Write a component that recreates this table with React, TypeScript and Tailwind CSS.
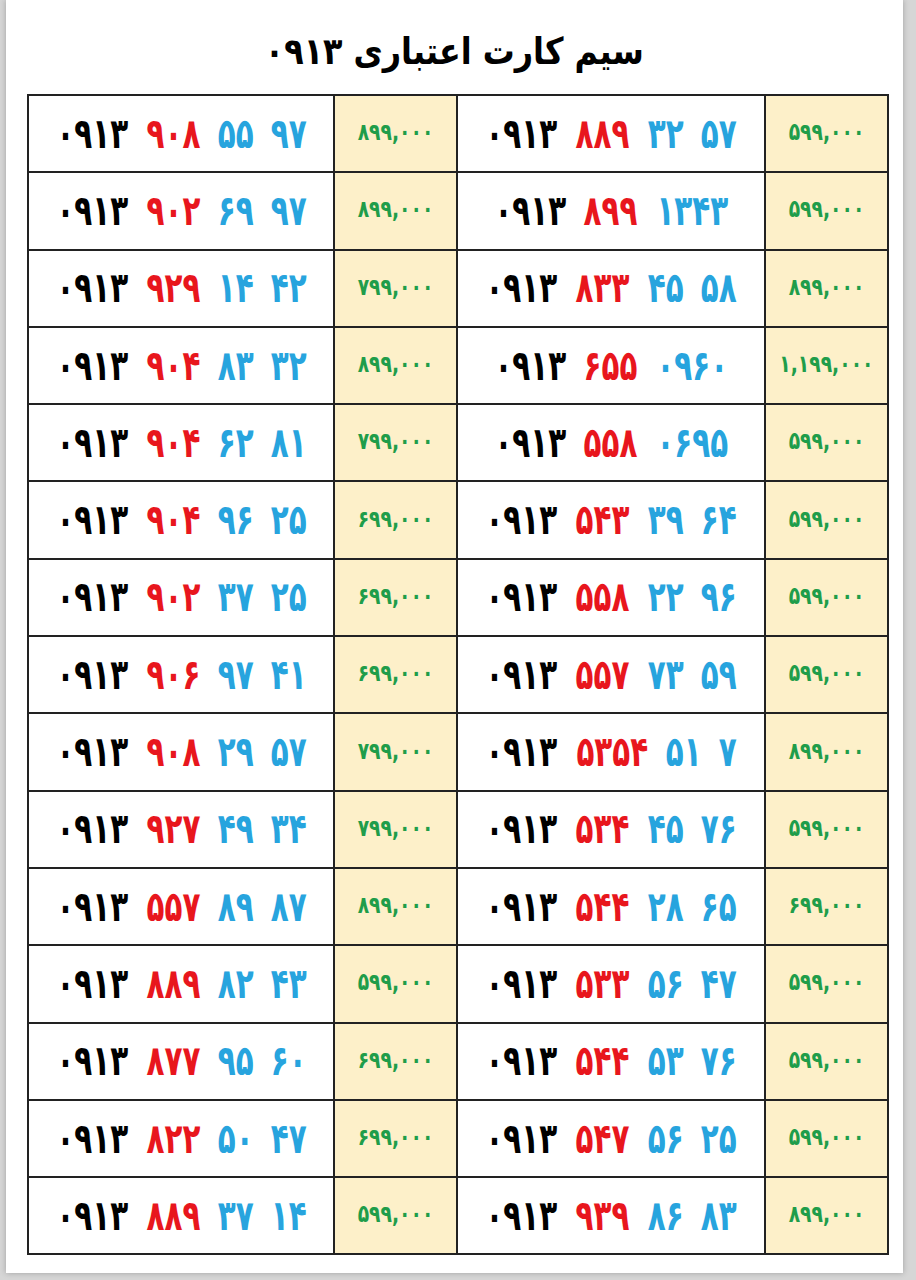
import React from "react";

type Item = { red: string; blue: string[]; price: string };

const rows: [Item, Item][] = [
  [{ red: "۹۰۸", blue: ["۵۵", "۹۷"], price: "۸۹۹,۰۰۰" }, { red: "۸۸۹", blue: ["۳۲", "۵۷"], price: "۵۹۹,۰۰۰" }],
  [{ red: "۹۰۲", blue: ["۶۹", "۹۷"], price: "۸۹۹,۰۰۰" }, { red: "۸۹۹", blue: ["۱۳۴۳"], price: "۵۹۹,۰۰۰" }],
  [{ red: "۹۲۹", blue: ["۱۴", "۴۲"], price: "۷۹۹,۰۰۰" }, { red: "۸۳۳", blue: ["۴۵", "۵۸"], price: "۸۹۹,۰۰۰" }],
  [{ red: "۹۰۴", blue: ["۸۳", "۳۲"], price: "۸۹۹,۰۰۰" }, { red: "۶۵۵", blue: ["۰۹۶۰"], price: "۱,۱۹۹,۰۰۰" }],
  [{ red: "۹۰۴", blue: ["۶۲", "۸۱"], price: "۷۹۹,۰۰۰" }, { red: "۵۵۸", blue: ["۰۶۹۵"], price: "۵۹۹,۰۰۰" }],
  [{ red: "۹۰۴", blue: ["۹۶", "۲۵"], price: "۶۹۹,۰۰۰" }, { red: "۵۴۳", blue: ["۳۹", "۶۴"], price: "۵۹۹,۰۰۰" }],
  [{ red: "۹۰۲", blue: ["۳۷", "۲۵"], price: "۶۹۹,۰۰۰" }, { red: "۵۵۸", blue: ["۲۲", "۹۶"], price: "۵۹۹,۰۰۰" }],
  [{ red: "۹۰۶", blue: ["۹۷", "۴۱"], price: "۶۹۹,۰۰۰" }, { red: "۵۵۷", blue: ["۷۳", "۵۹"], price: "۵۹۹,۰۰۰" }],
  [{ red: "۹۰۸", blue: ["۲۹", "۵۷"], price: "۷۹۹,۰۰۰" }, { red: "۵۳۵۴", blue: ["۵۱", "۷"], price: "۸۹۹,۰۰۰" }],
  [{ red: "۹۲۷", blue: ["۴۹", "۳۴"], price: "۷۹۹,۰۰۰" }, { red: "۵۳۴", blue: ["۴۵", "۷۶"], price: "۵۹۹,۰۰۰" }],
  [{ red: "۵۵۷", blue: ["۸۹", "۸۷"], price: "۸۹۹,۰۰۰" }, { red: "۵۴۴", blue: ["۲۸", "۶۵"], price: "۶۹۹,۰۰۰" }],
  [{ red: "۸۸۹", blue: ["۸۲", "۴۳"], price: "۵۹۹,۰۰۰" }, { red: "۵۳۳", blue: ["۵۶", "۴۷"], price: "۵۹۹,۰۰۰" }],
  [{ red: "۸۷۷", blue: ["۹۵", "۶۰"], price: "۶۹۹,۰۰۰" }, { red: "۵۴۴", blue: ["۵۳", "۷۶"], price: "۵۹۹,۰۰۰" }],
  [{ red: "۸۲۲", blue: ["۵۰", "۴۷"], price: "۶۹۹,۰۰۰" }, { red: "۵۴۷", blue: ["۵۶", "۲۵"], price: "۵۹۹,۰۰۰" }],
  [{ red: "۸۸۹", blue: ["۳۷", "۱۴"], price: "۵۹۹,۰۰۰" }, { red: "۹۳۹", blue: ["۸۶", "۸۳"], price: "۸۹۹,۰۰۰" }],
];

const shrink: Record<number, string> = {
  1: "-mx-[3.5px]",
  2: "-mx-[7px]",
  3: "-mx-[10.6px]",
  4: "-mx-[14.1px]",
};

function Group({ text, color }: { text: string; color: string }) {
  return (
    <span className={`inline-block origin-center scale-x-[0.7] ${color} ${shrink[text.length]}`}>{text}</span>
  );
}

function NumberCell({ item, wide }: { item: Item; wide: boolean }) {
  return (
    <td className={`${wide ? "w-[309px]" : "w-[307px]"} border-2 border-[#222] bg-white p-0`}>
      <div dir="ltr" className="flex items-center justify-center gap-[16px] text-[42px] font-bold leading-none">
        <Group text="۰۹۱۳" color="text-black" />
        <Group text={item.red} color="text-[#e8161d]" />
        {item.blue.map((b, i) => (
          <Group key={i} text={b} color="text-[#27a4de]" />
        ))}
      </div>
    </td>
  );
}

function PriceCell({ price }: { price: string }) {
  return (
    <td className="w-[123px] border-2 border-[#222] bg-[#fdf0c9] p-0 text-center">
      <span dir="ltr" className="inline-block origin-center scale-x-[0.78] text-[24px] font-bold leading-none text-[#1f9d4a]">
        {price}
      </span>
    </td>
  );
}

export default function App() {
  return (
    <div className="h-[1280px] w-[916px] bg-[#d6d6d6] pr-[13px] pb-[7px] pl-[6px]" style={{ fontFamily: '"DejaVu Sans", sans-serif' }}>
      <div className="flex h-full w-full flex-col items-start bg-white shadow-[0_0_6px_rgba(0,0,0,0.25)]">
        <div className="flex w-full justify-center pt-[30px] pb-[20px]">
          <h1 dir="rtl" className="inline-block origin-center scale-x-[0.86] text-[37px] font-bold leading-[44px] text-black">
            سیم کارت اعتباری ۰۹۱۳
          </h1>
        </div>
        <table className="ml-[21px] w-[862px] border-collapse border-2 border-[#222]">
          <tbody>
            {rows.map(([a, b], i) => (
              <tr key={i} className="h-[77.3px]">
                <NumberCell item={a} wide={false} />
                <PriceCell price={a.price} />
                <NumberCell item={b} wide={true} />
                <PriceCell price={b.price} />
              </tr>
            ))}
          </tbody>
        </table>
      </div>
    </div>
  );
}
